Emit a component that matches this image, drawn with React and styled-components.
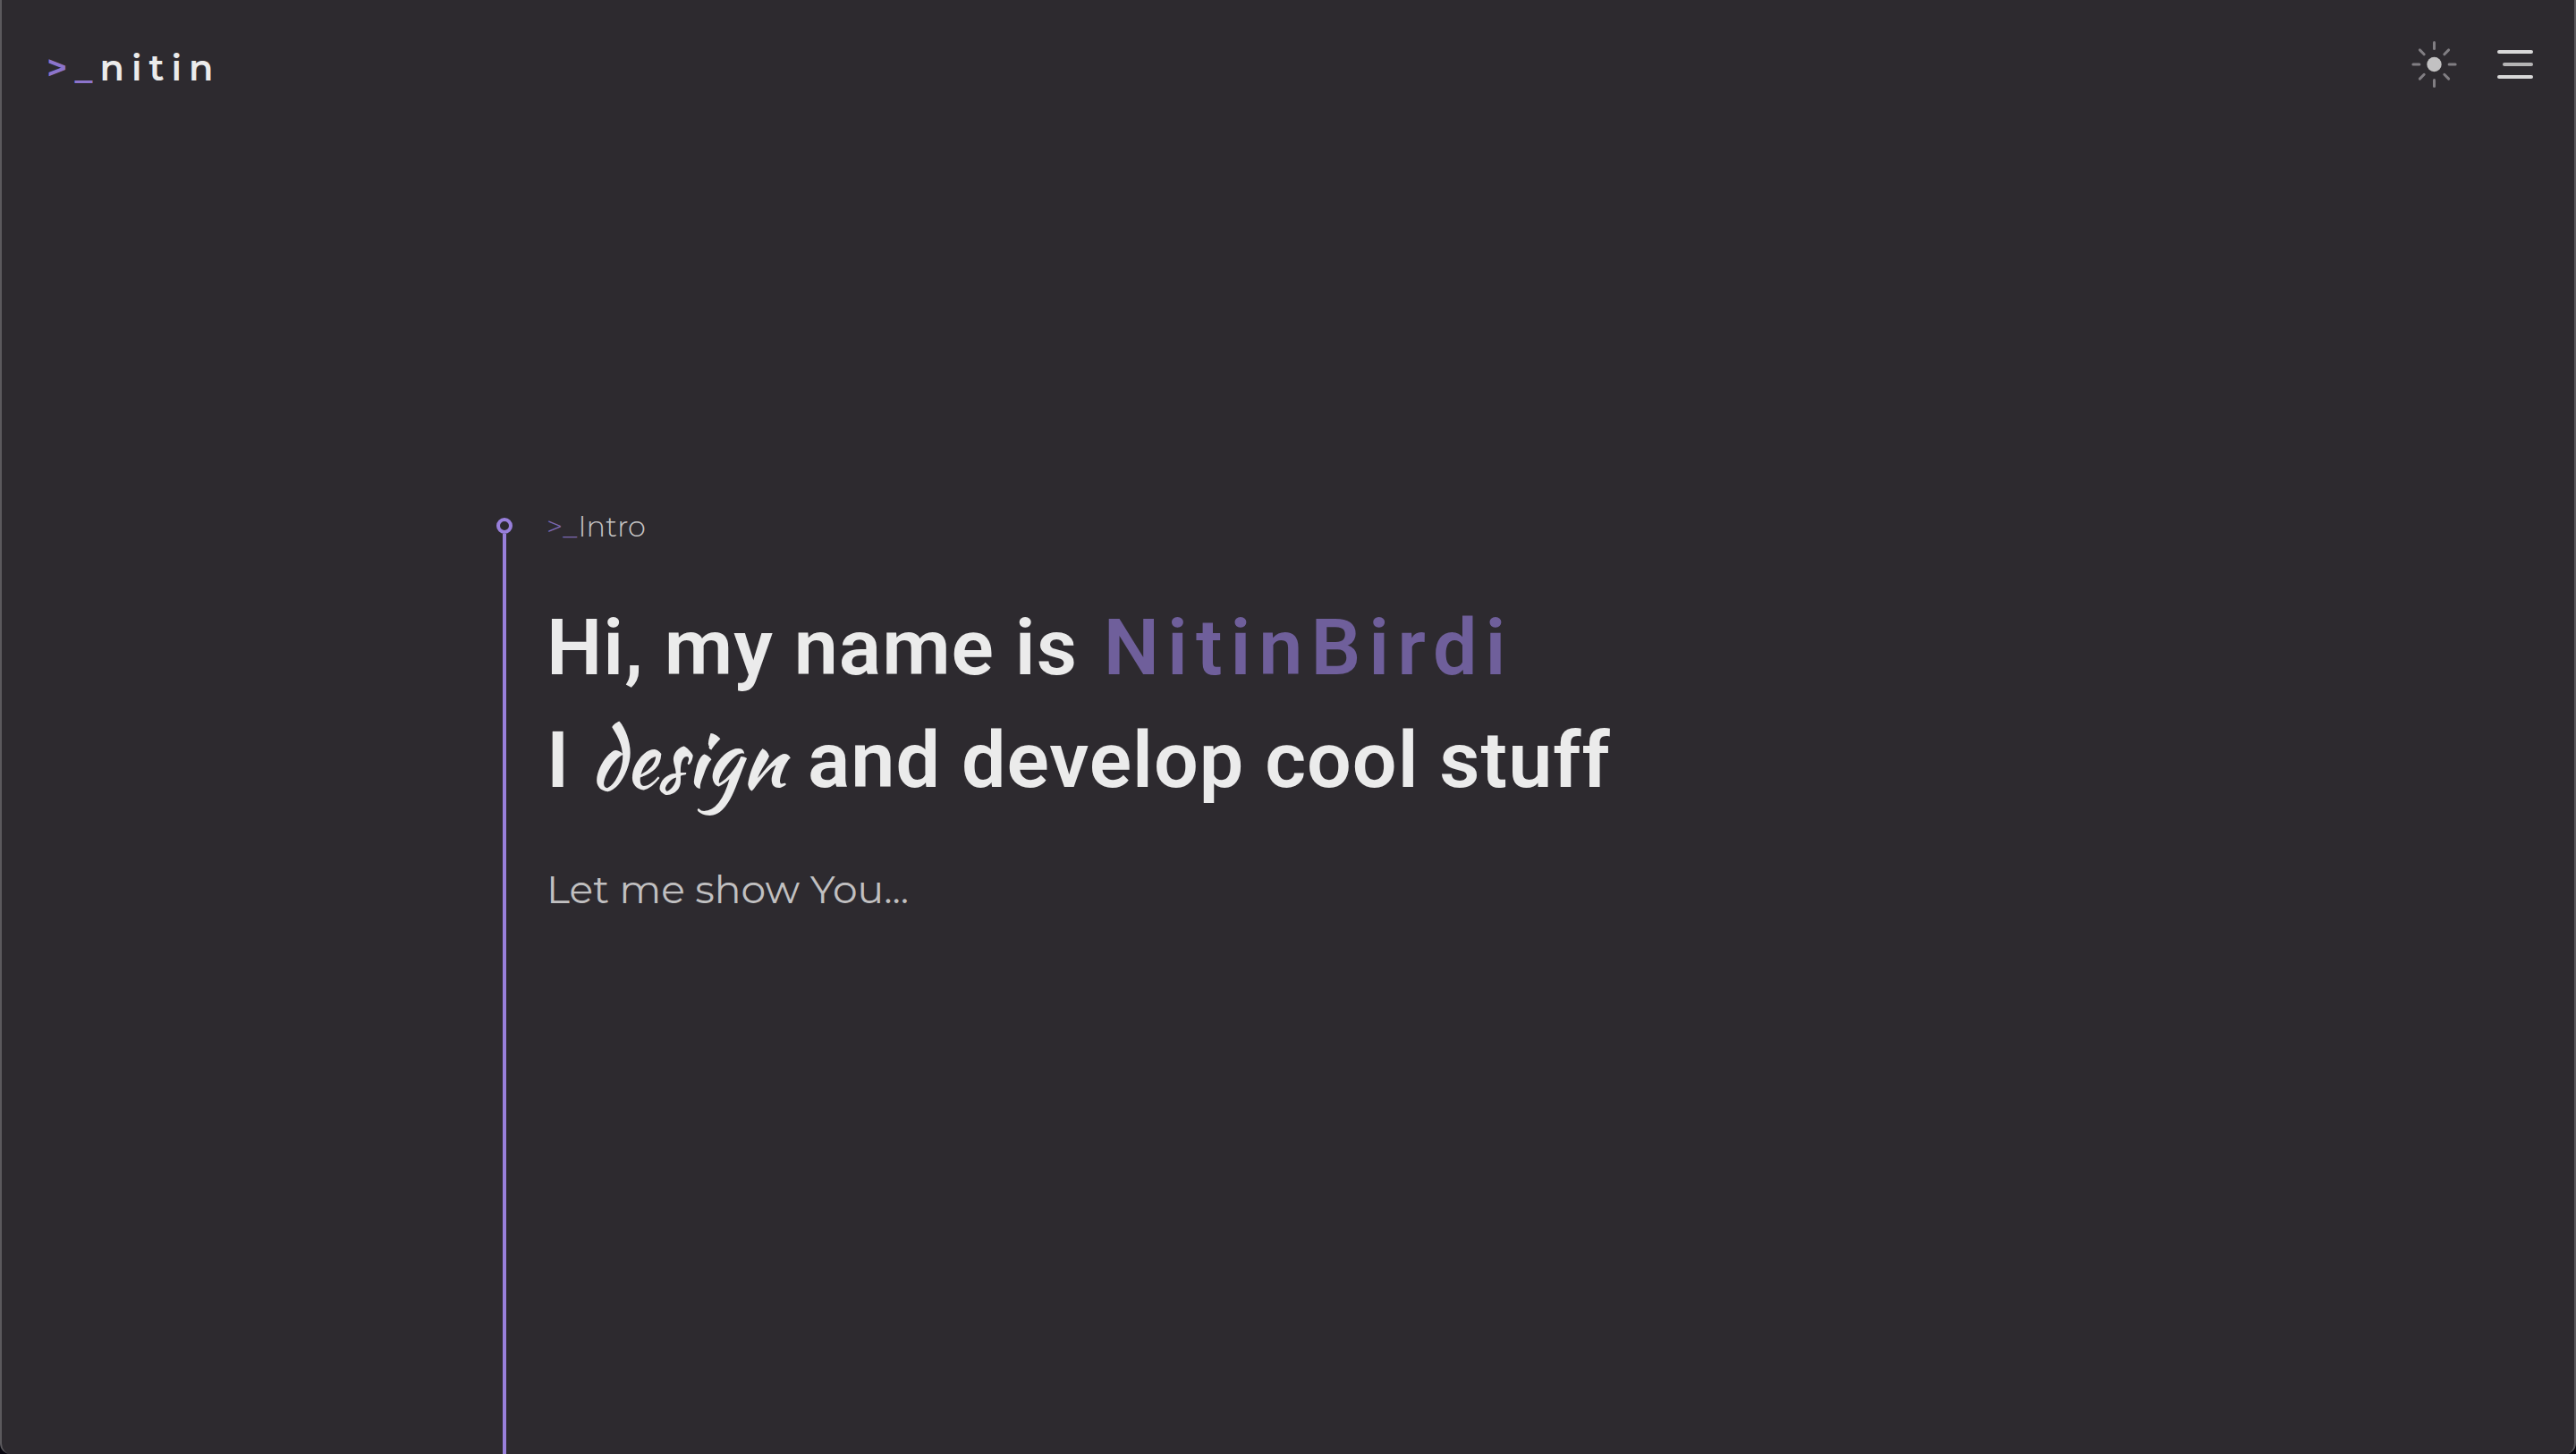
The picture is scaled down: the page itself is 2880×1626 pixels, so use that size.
import React from "react";
import styled, { createGlobalStyle } from "styled-components";

const GlobalStyle = createGlobalStyle`
  * { box-sizing: border-box; }
  body { margin: 0; background: #07060f; }
`;

const Page = styled.div`
  display: flex;
  flex-direction: column;
  min-height: 100vh;
  border: 2px solid #5b595d;
  border-top: 0;
  border-bottom: 0;
  border-radius: 0 0 12px 12px;
  background: #2d2a2f;
  color: #ebebeb;
  font-family: Montserrat, Inter, "Liberation Sans", sans-serif;
`;

const Header = styled.header`
  display: flex;
  align-items: center;
  justify-content: space-between;
  height: 144px;
  padding: 0 46px 0 50px;
`;

const Logo = styled.a`
  color: inherit;
  font-size: 40px;
  line-height: 48px;
  font-weight: 600;
  letter-spacing: 8px;
  padding-top: 8px;
  text-decoration: none;
`;

const Prompt = styled.span`
  color: ${(p) => p.$color};
`;

const Actions = styled.div`
  display: flex;
  align-items: center;
  gap: 44px;
`;

const IconButton = styled.button`
  display: flex;
  padding: 0;
  border: 0;
  background: none;
  cursor: pointer;
`;

const Main = styled.main`
  display: flex;
  flex: 1;
  gap: 38px;
  width: 100%;
  max-width: 1770px;
  margin: 0 auto;
  padding-top: 424px;
`;

const Timeline = styled.div`
  display: flex;
  flex-direction: column;
  align-items: center;
  width: 18px;
  padding-top: 11px;
`;

const Dot = styled.span`
  width: 18px;
  height: 18px;
  border: 4px solid #987fdb;
  border-radius: 50%;
`;

const Line = styled.span`
  flex: 1;
  width: 4px;
  background: #987fdb;
`;

const Content = styled.section`
  flex: 1;
`;

const Label = styled.p`
  margin: 0 0 51px;
  color: #c5c4c5;
  font-size: 32px;
  line-height: 42px;
  font-weight: 300;
`;

const Heading = styled.h1`
  margin: 0 0 53px;
  font-family: Roboto, "Liberation Sans", sans-serif;
  font-size: 88px;
  line-height: 126px;
  font-weight: 600;
  letter-spacing: 1px;
`;

const Row = styled.span`
  display: block;
`;

const Name = styled.span`
  margin-left: 6px;
  color: #6f5f9b;
  letter-spacing: 9px;
`;

const Script = styled.em`
  margin-right: 2px;
  font-family: "Kaushan Script", "Liberation Serif", serif;
  font-style: normal;
  font-weight: 400;
  line-height: 1;
`;

const Lead = styled.p`
  margin: 0;
  color: #c1c0c1;
  font-size: 44px;
  line-height: 56px;
`;

const rays = [0, 45, 90, 135, 180, 225, 270, 315];

export default function App() {
  return (
    <>
      <GlobalStyle />
      <Page>
        <Header>
          <Logo href="#home">
            <Prompt $color="#8c74cc">&gt;_</Prompt>nitin
          </Logo>
          <Actions>
            <IconButton type="button" aria-label="Toggle theme">
              <svg width="52" height="52" viewBox="0 0 52 52">
                <circle cx="25.5" cy="26" r="8.2" fill="#c2c1c2" />
                {rays.map((angle) => (
                  <path
                    key={angle}
                    d={angle % 90 ? "M25.5 3.2V10" : angle % 180 ? "M25.5 2.4V9.4" : "M25.5 1.6V8.6"}
                    stroke="#817e83"
                    strokeWidth="3"
                    strokeLinecap="round"
                    transform={`rotate(${angle} 25.5 26)`}
                  />
                ))}
              </svg>
            </IconButton>
            <IconButton type="button" aria-label="Open menu">
              <svg width="40" height="32" viewBox="0 0 40 32">
                <rect x="0" y="0" width="40" height="4" rx="2" fill="#d8d8d8" />
                <rect x="6" y="14" width="34" height="4" rx="2" fill="#b5b4b5" />
                <rect x="0" y="28" width="40" height="4" rx="2" fill="#d8d8d8" />
              </svg>
            </IconButton>
          </Actions>
        </Header>
        <Main>
          <Timeline>
            <Dot />
            <Line />
          </Timeline>
          <Content>
            <Label>
              <Prompt $color="#7c68b2">&gt;_</Prompt>Intro
            </Label>
            <Heading>
              <Row>
                Hi, my name is <Name>NitinBirdi</Name>
              </Row>
              <Row>
                I <Script>design</Script> and develop cool stuff
              </Row>
            </Heading>
            <Lead>Let me show You...</Lead>
          </Content>
        </Main>
      </Page>
    </>
  );
}
